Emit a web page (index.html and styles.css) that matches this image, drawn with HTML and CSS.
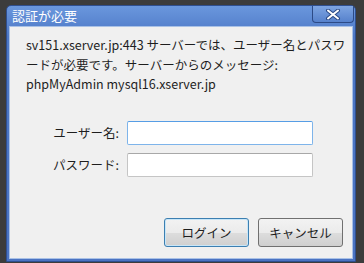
FILE: index.html
```html
<!DOCTYPE html>
<html lang="ja">
<head>
    <meta charset="UTF-8">
    <title>認証が必要</title>
    <link rel="stylesheet" href="styles.css">
</head>
<body>
    <div class="window">
        <div class="titlebar">
            <span class="title">認証が必要</span>
            <button class="close" type="button" aria-label="閉じる">
                <svg width="16" height="11" viewBox="0 0 16 11">
                    <path d="M3 1.5 L13 9.5 M13 1.5 L3 9.5" stroke="#2b4a86" stroke-width="4" stroke-linecap="round"/>
                    <path d="M3 1.5 L13 9.5 M13 1.5 L3 9.5" stroke="#ffffff" stroke-width="2" stroke-linecap="round"/>
                </svg>
            </button>
        </div>
        <div class="content">
            <p class="message">sv151.xserver.jp:443 サーバーでは、ユーザー名とパスワードが必要です。サーバーからのメッセージ: phpMyAdmin mysql16.xserver.jp</p>
            <form class="login-form">
                <div class="row">
                    <label for="user">ユーザー名:</label>
                    <input type="text" id="user" class="focused">
                </div>
                <div class="row">
                    <label for="pass">パスワード:</label>
                    <input type="password" id="pass">
                </div>
                <div class="actions">
                    <button type="submit" class="btn default">ログイン</button>
                    <button type="button" class="btn">キャンセル</button>
                </div>
            </form>
        </div>
    </div>
</body>
</html>
```

FILE: styles.css
```css
body {
    margin: 0;
    background: #3c3c3c;
    font-family: "Noto Sans CJK JP", "Noto Sans", sans-serif;
    padding: 5px 0 0 6px;
}
.window {
    width: 348px;
    height: 255px;
    background: linear-gradient(to bottom, #6a97dd, #4d78c6 30px, #4a73c2);
    border: 1px solid #2f4f8f;
    border-radius: 5px 5px 0 0;
    display: flex;
    flex-direction: column;
}
.titlebar {
    height: 20px;
    display: flex;
    align-items: center;
    justify-content: space-between;
    padding-left: 5px;
}
.title {
    color: #ffffff;
    font-size: 13px;
    line-height: 20px;
}
.close {
    width: 42px;
    height: 17px;
    margin-top: -3px;
    margin-right: 1px;
    border: 1px solid #2c4a86;
    border-top: none;
    border-radius: 0 0 4px 4px;
    background: linear-gradient(to bottom, #7ea5e2, #5681cc);
    display: flex;
    align-items: center;
    justify-content: center;
    padding: 0;
}
.content {
    flex: 1;
    margin: 0 2px 2px 2px;
    background: #f0f0f0;
    border: 1px solid #a9c1e6;
    padding: 8px 0 0 16px;
}
.message {
    margin: 0;
    font-size: 12.5px;
    line-height: 19.5px;
    color: #1e1e1e;
    width: 320px;
}
.login-form {
    margin-top: 27px;
}
.row {
    display: flex;
    align-items: center;
    height: 24px;
    margin-bottom: 8px;
}
.row label {
    width: 93px;
    text-align: right;
    font-size: 12.5px;
    color: #1e1e1e;
    margin-right: 8px;
}
.row input {
    width: 186px;
    height: 24px;
    box-sizing: border-box;
    border: 1px solid #c5c5c5;
    border-top-color: #a8a8a8;
    background: #ffffff;
    margin: 0;
    border-radius: 2px;
}
.row input.focused {
    border-color: #7eb4ea;
    border-top-color: #569de5;
}
.actions {
    display: flex;
    justify-content: flex-end;
    gap: 9px;
    margin-top: 41px;
    margin-right: 9px;
}
.btn {
    width: 85px;
    height: 29px;
    font-family: inherit;
    font-size: 12.5px;
    color: #1e1e1e;
    border: 1px solid #707070;
    border-radius: 3px;
    background: linear-gradient(to bottom, #f2f2f2 0%, #ebebeb 50%, #dddddd 51%, #cfcfcf 100%);
    padding: 0;
}
.btn.default {
    border-color: #3c7fb1;
    box-shadow: inset 0 0 0 1px #c8e6f8;
}
```
